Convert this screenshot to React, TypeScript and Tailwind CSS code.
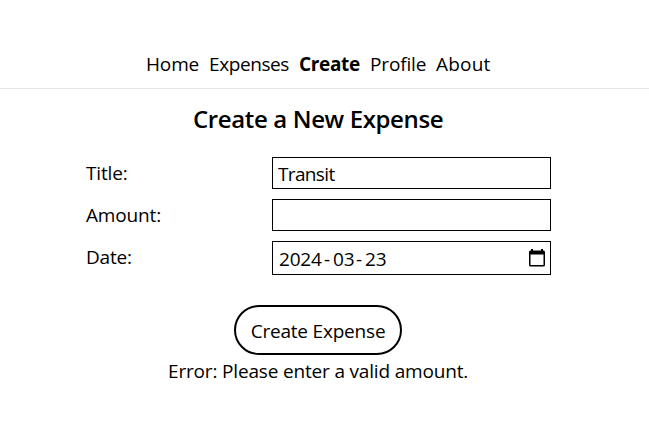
import React from 'react';

const fields = [
  { label: 'Title:', value: 'Transit' },
  { label: 'Amount:', value: '' },
];

export default function App() {
  return (
    <div className="h-[433px] w-[649px] overflow-hidden bg-white pt-[50px] font-['Open_Sans','Noto_Sans',sans-serif] text-[19px] leading-7 font-normal text-black">
      <nav className="flex h-[39px] justify-start gap-[10px] border-b border-[#e5e7eb] pl-[146px] whitespace-nowrap">
        <a className="w-[53px] tracking-[-0.15px]">Home</a>
        <a className="w-[80px] tracking-[-0.4px]">Expenses</a>
        <a className="w-[61px] font-bold tracking-[-0.35px]">Create</a>
        <a className="w-[56px] tracking-[-0.15px]">Profile</a>
        <a className="w-[55px] tracking-[0.2px]">About</a>
      </nav>
      <main className="flex flex-col">
        <h1 className="mt-[14px] ml-[193px] text-[24px] leading-8 font-semibold tracking-[-0.37px] whitespace-nowrap">Create a New Expense</h1>
        <form className="mt-[22px] ml-[86px] flex w-[465px] flex-col gap-[10px]">
          {fields.map((f) => (
            <label key={f.label} className="flex h-8 justify-between">
              <span className="leading-8 tracking-[-0.15px]">{f.label}</span>
              <input readOnly value={f.value} className="w-[279px] border border-black px-[5px] pt-px tracking-[-0.65px] outline-none" />
            </label>
          ))}
          <label className="flex h-[34px] justify-between">
            <span className="leading-8 tracking-[-0.2px]">Date:</span>
            <span className="flex w-[279px] items-center justify-between border border-black pr-[5px] pl-[6px]">
              <span className="flex pt-[2px] tracking-[-0.2px]">
                <span className="w-[45px]">2024</span>
                <span className="w-[9px]">-</span>
                <span className="w-[23px]">03</span>
                <span className="w-[9px]">-</span>
                <span>23</span>
              </span>
              <svg className="mb-px h-[18px] w-4" viewBox="0 0 16 18">
                <path fill="black" fillRule="evenodd" d="M2 0h2v1.5h8V0h2v1.5h.5A1.5 1.5 0 0 1 16 3v13a1.5 1.5 0 0 1-1.5 1.5h-13A1.5 1.5 0 0 1 0 16V3a1.5 1.5 0 0 1 1.5-1.5H2zM1.5 5.5V16h13V5.5z" />
              </svg>
            </span>
          </label>
        </form>
        <button className="mt-[30px] ml-[234px] h-[50px] w-[168px] rounded-full border-2 border-black pt-[2px] tracking-[-0.2px] whitespace-nowrap">Create Expense</button>
        <p className="mt-[2px] ml-[168px] tracking-[-0.17px] whitespace-nowrap">Error: Please enter a valid amount.</p>
      </main>
    </div>
  );
}
